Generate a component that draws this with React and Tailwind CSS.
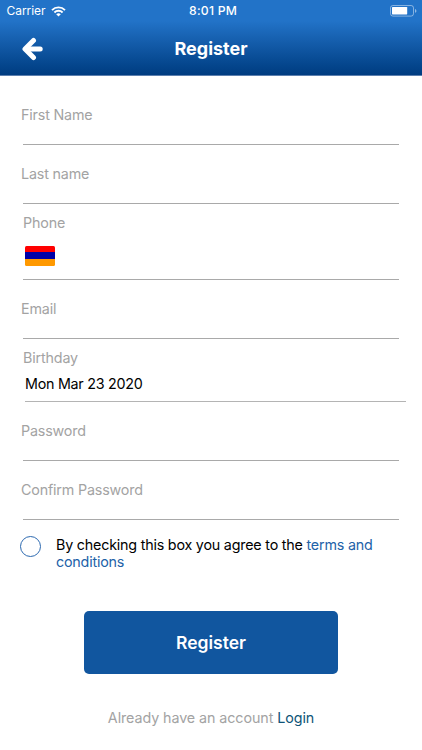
function StatusBar() {
  return (
    <div className="relative flex h-[22px] items-center justify-between pl-[6.5px] pr-[5px] text-white">
      <div className="flex items-center gap-[5px]">
        <span className="w-[39px] text-[12px] leading-[22px] tracking-[-0.05px]">Carrier</span>
        <svg width="15" height="11" viewBox="0 0 15 11" fill="none" stroke="currentColor" strokeWidth="1.9">
          <path d="M1 4.1a9.2 9.2 0 0 1 13 0" />
          <path d="M3.4 6.5a5.8 5.8 0 0 1 8.2 0" />
          <path d="M7.5 10.6 5.2 8.3a3.3 3.3 0 0 1 4.6 0z" fill="currentColor" stroke="none" />
        </svg>
      </div>
      <span className="absolute left-[189px] text-[12.2px] font-medium leading-[22px] tracking-[0.25px]">
        8:01 PM
      </span>
      <svg width="27" height="12" viewBox="0 0 27 12">
        <rect x="0.5" y="0.5" width="23" height="10.6" rx="2.4" fill="none" stroke="#fff" strokeOpacity="0.45" />
        <rect x="2" y="2" width="15.2" height="7.4" rx="0.6" fill="#fff" />
        <path d="M25 4v3.8c.8-.3 1.4-1 1.4-1.9S25.8 4.3 25 4z" fill="#fff" fillOpacity="0.5" />
      </svg>
    </div>
  );
}

function BackArrow() {
  return (
    <svg
      width="23"
      height="24"
      viewBox="0 0 23 24"
      fill="none"
      stroke="currentColor"
      strokeWidth="5"
      strokeLinecap="round"
      strokeLinejoin="round"
    >
      <path d="M12.5 3.5 4 12l8.500 8.500" />
      <path d="M6 12h13.2" />
    </svg>
  );
}

function Header() {
  return (
    <header className="h-[76px] border-b border-[#5c7fae] bg-linear-to-b from-[#2273c8] from-28% to-[#003c80]">
      <StatusBar />
      <div className="grid h-[53px] grid-cols-[1fr_auto_1fr] items-center">
        <button type="button" aria-label="Back" className="pl-[20.5px] text-white">
          <BackArrow />
        </button>
        <h1 className="text-[18px] font-bold leading-[22px] tracking-[0px] text-white">Register</h1>
      </div>
    </header>
  );
}

function Field({ label }) {
  return (
    <div className="mx-[23px] h-[59px] border-b border-[#a9a9a9]">
      <span className="-ml-[2px] block pt-[20px] text-[14.3px] leading-[18px] tracking-[-0.17px] text-[#a3a3a3]">
        {label}
      </span>
    </div>
  );
}

function PhoneField() {
  return (
    <div className="mx-[23px] h-[76px] border-b border-[#a9a9a9]">
      <span className="block pt-[10px] text-[14.3px] leading-[18px] tracking-[-0.15px] text-[#a3a3a3]">Phone</span>
      <div className="ml-[2px] mt-[13.5px] flex h-[20px] w-[30px] flex-col overflow-hidden rounded-[1.5px]">
        <div className="flex-1 bg-[#ff0000]" />
        <div className="flex-1 bg-[#0000a8]" />
        <div className="flex-1 bg-[#ff9900]" />
      </div>
    </div>
  );
}

function BirthdayField() {
  return (
    <div className="ml-[23px] mr-[16px] h-[63px]">
      <span className="block pt-[10px] text-[14.3px] leading-[18px] tracking-[-0.15px] text-[#a3a3a3]">Birthday</span>
      <div className="ml-[2px] h-[35px] border-b border-[#b4b4b4] pt-[8px] text-[14.3px] leading-[18px] tracking-[-0.26px] text-black">
        Mon Mar 23 2020
      </div>
    </div>
  );
}

export default function App() {
  return (
    <div className="h-[750px] w-[422px] overflow-hidden bg-white font-['Inter',sans-serif]">
      <Header />
      <form className="pt-[10px]">
        <Field label="First Name" />
        <Field label="Last name" />
        <PhoneField />
        <Field label="Email" />
        <BirthdayField />
        <Field label="Password" />
        <Field label="Confirm Password" />

        <div className="flex pl-[20px] pt-[16px]">
          <span className="h-[21px] w-[21px] shrink-0 rounded-full border border-[#2c69b0]" />
          <p className="ml-[15px] whitespace-nowrap text-[14.3px] leading-[17px] tracking-[-0.2px] text-black">
            By checking this box you agree to the <span className="text-[#2262a8]">terms and</span>
            <br />
            <span className="text-[#2262a8]">conditions</span>
          </p>
        </div>

        <button
          type="button"
          className="mx-auto mt-[41px] block h-[63px] w-[254px] rounded-[5px] bg-[#11569f] pt-[2px] text-[17.5px] font-semibold text-white"
        >
          Register
        </button>
        <p className="mt-[35px] text-center text-[14.3px] leading-[18px] tracking-[-0.08px] text-[#a3a3a3]">
          Already have an account <span className="text-[#0f5478]">Login</span>
        </p>
      </form>
    </div>
  );
}
